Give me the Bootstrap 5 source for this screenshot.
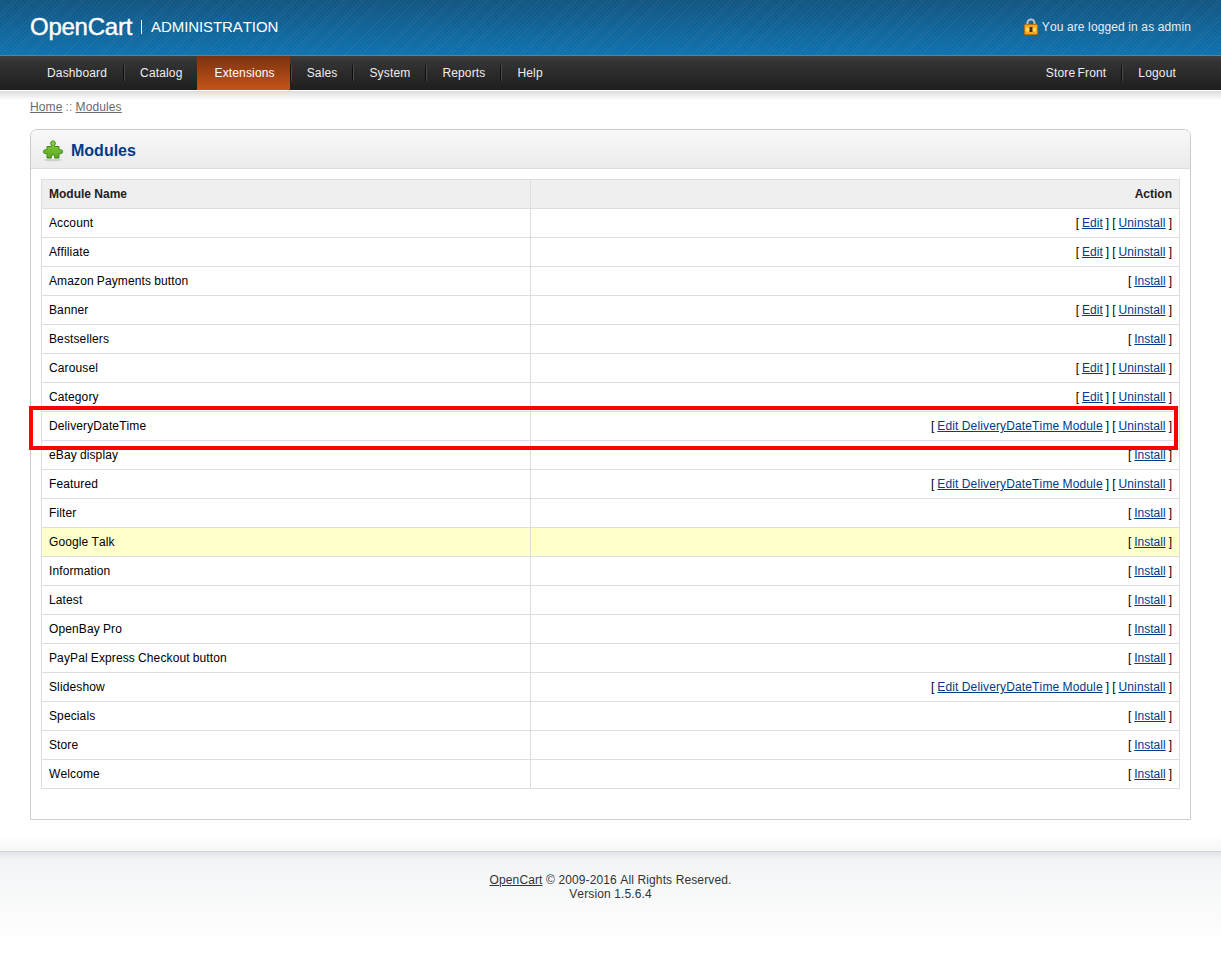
<!DOCTYPE html>
<html lang="en">
<head>
    <meta charset="UTF-8">
    <meta name="viewport" content="width=device-width, initial-scale=1.0">
    <title>Modules</title>
    <link href="https://cdn.jsdelivr.net/npm/bootstrap@5.3.0/dist/css/bootstrap.min.css" rel="stylesheet">
    <style>
        body {
            font-family: "Liberation Sans", Arial, sans-serif;
            font-size: 12px;
            line-height: 14px;
            color: #000;
            background: #fff;
            min-height: 963px;
            position: relative;
            font-kerning: none;
            letter-spacing: .12px;
        }
        a { color: #003a88; }
        .top-bar {
            height: 55px;
            padding: 0 30px 2px;
            color: #fff;
            background:
                repeating-linear-gradient(135deg, rgba(255,255,255,.05) 0 1px, rgba(255,255,255,0) 1px 3px),
                linear-gradient(#125581, #0f72ae);
        }
        .logo-row { padding-top: 1px; }
        .logo-main { font-size: 24px; letter-spacing: -.25px; -webkit-text-stroke: .4px #fff; line-height: 28px; font-kerning: normal; }
        .logo-sep { width: 1px; height: 14px; background: #fff; margin: 0 9px; }
        .logo-sub { font-size: 15px; line-height: 20px; letter-spacing: -.08px; }
        .login-note { color: #e4eef6; font-size: 12px; }
        .menu-bar {
            height: 36px;
            padding: 0 29px 0 31px;
            border-top: 1px solid #4b87ad;
            border-bottom: 1px solid #fff;
            background: linear-gradient(#3b3b3b 0, #3b3b3b 3px, #353535 4px, #1e1e1e 100%);
            letter-spacing: .15px;
        }
        .menu-right { letter-spacing: .16px; word-spacing: -1.3px; }
        .menu-item {
            display: block;
            padding: 0 16px;
            height: 34px;
            line-height: 35px;
            color: #eee;
            text-decoration: none;
            position: relative;
        }
        .menu-item.first { padding-right: 17px; }
        .menu-item.split::after {
            content: "";
            position: absolute;
            right: 0;
            top: 9px;
            width: 1px;
            height: 16px;
            background: #0e0e0e;
            box-shadow: 1px 0 0 #4a4a4a;
        }
        .menu-item.on {
            color: #fff;
            padding: 0 15px 0 17px;
            margin: 0 1px 0 -1px;
            background: linear-gradient(#7a330f, #c6531a);
        }
        .menu-item.on::after { right: -1px; }
        .shade-strip { height: 9px; background: linear-gradient(#dcdcdc, #fff); }
        .crumbs { padding: 0 30px; height: 29px; color: #7f7f7f; word-spacing: -.4px; }
        .crumbs a { color: #6a6a6a; }
        .page-box {
            margin: 0 30px;
            height: 691px;
            border: 1px solid #ccc;
            border-top-left-radius: 7px;
            border-top-right-radius: 7px;
        }
        .box-head {
            height: 39px;
            padding-left: 11px;
            border-bottom: 1px solid #ddd;
            border-top-left-radius: 7px;
            border-top-right-radius: 7px;
            background: linear-gradient(#f8f8f8, #ebebeb);
        }
        .box-head svg { margin-top: 4px; }
        .box-head h1 { font-size: 16px; line-height: 20px; font-weight: 700; color: #003a88; margin: 4px 0 0 7px; font-kerning: normal; letter-spacing: 0; }
        .box-body { padding: 10px; }
        .mod-table { width: 100%; border-collapse: collapse; margin: 0; }
        .mod-table th, .mod-table td {
            border: 1px solid #ddd;
            height: 29px;
            padding: 0 7px;
            vertical-align: middle;
            word-spacing: -.4px;
        }
        .mod-table th { background: #efefef; color: #222; font-weight: 700; letter-spacing: 0; word-spacing: 0; }
        .mod-table td:first-child, .mod-table th:first-child { width: 489px; }
        .mod-table tr.hit td { background: #ffc; }
        .mod-table td.act-cell { letter-spacing: 0; word-spacing: -.3px; }
        .act-wide { letter-spacing: .14px; }
        .act-mid { letter-spacing: .12px; }
        .red-mark {
            position: absolute;
            left: 29px;
            top: 406px;
            width: 1149px;
            height: 44px;
            border: 4px solid #f00;
            pointer-events: none;
        }
        .foot-shade { height: 16px; margin-top: 15px; background: linear-gradient(#fff, #f6f6f6); }
        .foot-area {
            height: 96px;
            padding-top: 21px;
            text-align: center;
            color: #333;
            border-top: 1px solid #d0d5dc;
            background: linear-gradient(#e3e6ea 0, #f3f4f6 8px, #f6f7f8 30px, #fff 100%);
        }
        .foot-area a { color: #333; }
    </style>
</head>
<body>
    <div class="top-bar d-flex justify-content-between align-items-center">
        <div class="logo-row d-flex align-items-center">
            <span class="logo-main">OpenCart</span>
            <span class="logo-sep"></span>
            <span class="logo-sub">ADMINISTRATION</span>
        </div>
        <div class="login-note d-flex align-items-center gap-1">
            <svg width="14" height="17" viewBox="0 0 14 17" aria-hidden="true">
                <path d="M3.5 8V5a3.5 3.5 0 0 1 7 0v3" fill="none" stroke="#b9c2c9" stroke-width="2"/>
                <rect x=".5" y="6.5" width="13" height="10" rx="1" fill="#f0a81e" stroke="#b5760d"/>
                <rect x="2" y="9.5" width="10" height="4" fill="#ffd766"/>
                <rect x="5.5" y="9" width="3" height="5" fill="#4a2c05"/>
            </svg>
            <span>You are logged in as admin</span>
        </div>
    </div>
    <div class="menu-bar d-flex justify-content-between">
        <nav class="d-flex">
            <a class="menu-item first split" href="#">Dashboard</a>
            <a class="menu-item" href="#">Catalog</a>
            <a class="menu-item split on" href="#">Extensions</a>
            <a class="menu-item split" href="#">Sales</a>
            <a class="menu-item split" href="#">System</a>
            <a class="menu-item split" href="#">Reports</a>
            <a class="menu-item" href="#">Help</a>
        </nav>
        <nav class="menu-right d-flex">
            <a class="menu-item split" href="#">Store Front</a>
            <a class="menu-item" href="#">Logout</a>
        </nav>
    </div>
    <div class="shade-strip"></div>
    <div class="crumbs"><a href="#">Home</a> :: <a href="#">Modules</a></div>
    <div class="page-box">
        <div class="box-head d-flex align-items-center">
            <svg width="22" height="22" viewBox="0 0 22 22" aria-hidden="true">
                <defs>
                    <linearGradient id="puzzleFill" x1="0" y1="0" x2="0" y2="1">
                        <stop offset="0" stop-color="#8ccf3f"/>
                        <stop offset="1" stop-color="#5aa821"/>
                    </linearGradient>
                </defs>
                <ellipse cx="11" cy="20" rx="9" ry="1.5" fill="#cfcfcf"/>
                <path d="M5 6.5h4.5V5.2a2.4 2.4 0 1 1 3 0v1.3H17v3.4h.8a2 2 0 1 1 0 3.6H17v4.5h-4.4v-1.7a1.6 1.6 0 0 0-3.2 0v1.7H5v-4.5h-.8a2 2 0 1 1 0-3.6H5z" fill="url(#puzzleFill)" stroke="#3f8a1c"/>
                <path d="M11 16.5v2.5" stroke="#fff" stroke-width="1.4"/>
            </svg>
            <h1>Modules</h1>
        </div>
        <div class="box-body">
            <table class="mod-table">
                <thead>
                    <tr><th>Module Name</th><th class="text-end">Action</th></tr>
                </thead>
                <tbody id="rows"></tbody>
            </table>
        </div>
    </div>
    <div class="foot-shade"></div>
    <div class="foot-area">
        <a href="#">OpenCart</a> © 2009-2016 All Rights Reserved.<br>Version 1.5.6.4
    </div>
    <div class="red-mark"></div>

    <script>
        const edit = 'Edit';
        const ddt = 'Edit DeliveryDateTime Module';
        const modules = [
            ['Account', edit], ['Affiliate', edit], ['Amazon Payments button'], ['Banner', edit],
            ['Bestsellers'], ['Carousel', edit], ['Category', edit], ['DeliveryDateTime', ddt],
            ['eBay display'], ['Featured', ddt], ['Filter'], ['Google Talk'], ['Information'],
            ['Latest'], ['OpenBay Pro'], ['PayPal Express Checkout button'], ['Slideshow', ddt],
            ['Specials'], ['Store'], ['Welcome']
        ];
        document.getElementById('rows').innerHTML = modules.map(([name, label]) => {
            const editCls = label === ddt ? ' class="act-wide"' : '';
            const action = label
                ? `[ <a href="#"${editCls}>${label}</a> ] [ <a href="#" class="act-mid">Uninstall</a> ]`
                : `[ <a href="#">Install</a> ]`;
            const cls = name === 'Google Talk' ? ' class="hit"' : '';
            return `<tr${cls}><td>${name}</td><td class="act-cell text-end">${action}</td></tr>`;
        }).join('');
    </script>
    <script src="https://cdn.jsdelivr.net/npm/bootstrap@5.3.0/dist/js/bootstrap.bundle.min.js"></script>
</body>
</html>
